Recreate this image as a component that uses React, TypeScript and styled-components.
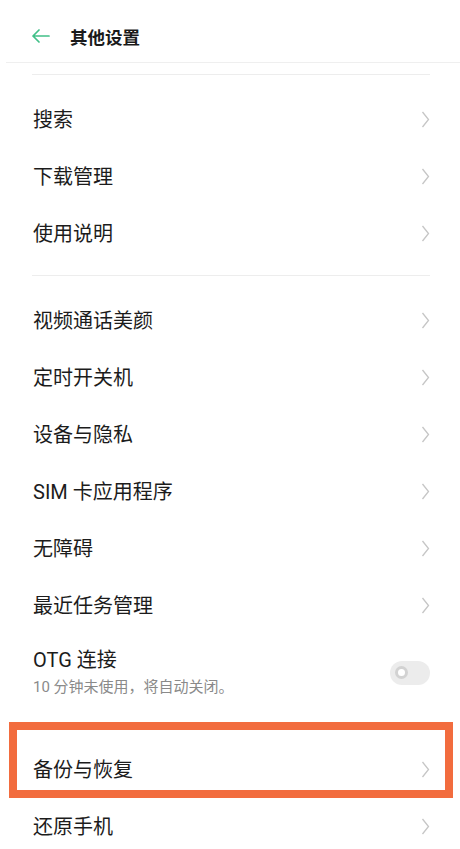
import React from "react";
import styled, { createGlobalStyle } from "styled-components";

const GlobalStyle = createGlobalStyle`
    body {
        margin: 0;
        background: #ffffff;
        font-family: Roboto, "Noto Sans CJK SC", sans-serif;
        color: #1c1c1c;
    }
`;

const Page = styled.div`
    width: 460px;
    height: 849px;
    overflow: hidden;
    background: #fff;
`;

const Header = styled.header`
    height: 63px;
    margin-left: 6px;
    padding: 10px 0 0 25px;
    box-sizing: border-box;
    display: flex;
    align-items: center;
    gap: 20px;
    border-bottom: 1px solid #efefef;
`;

const BackButton = styled.button`
    border: none;
    background: none;
    padding: 0;
    display: flex;
    cursor: pointer;
`;

const Title = styled.h1`
    margin: 0;
    font-size: 17.5px;
    font-weight: 600;
    color: #1a1a1a;
`;

const Divider = styled.div<{ $top: number }>`
    height: 1px;
    background: #ededed;
    margin: ${(p) => p.$top}px 30px 0 32px;
`;

const Section = styled.section<{ $top: number }>`
    padding-top: ${(p) => p.$top}px;
`;

const Row = styled.div`
    position: relative;
    height: 57px;
    display: flex;
    align-items: center;
    justify-content: space-between;
    padding: 0 30px 0 33px;
`;

const RowLabel = styled.span`
    font-size: 20px;
    line-height: 26px;
`;

const TwoLineRow = styled.div`
    display: flex;
    align-items: center;
    justify-content: space-between;
    padding: 13px 30px 18px 33px;
`;

const TextStack = styled.div`
    display: flex;
    flex-direction: column;
    gap: 4px;
`;

const SubLabel = styled.span`
    font-size: 15px;
    line-height: 21px;
    color: #8a8a8a;
`;

const Toggle = styled.div`
    width: 40px;
    height: 24px;
    border-radius: 12px;
    background: #ececec;
    display: flex;
    align-items: center;
    padding-left: 5px;
    box-sizing: border-box;
`;

const Knob = styled.div`
    width: 13px;
    height: 13px;
    border-radius: 50%;
    border: 3px solid #d2d2d2;
    background: #fff;
    box-sizing: border-box;
`;

const Highlight = styled.div`
    position: absolute;
    top: -19px;
    bottom: 0;
    left: 9px;
    right: 7px;
    border: 8px solid #f26c3e;
    pointer-events: none;
`;

const Chevron = () => (
    <svg width="9" height="17" viewBox="0 0 9 17">
        <polyline points="1.5,1 7.5,8.5 1.5,16" fill="none" stroke="#c6c6c6" strokeWidth="1.3" />
    </svg>
);

const BackArrow = () => (
    <svg width="19" height="14" viewBox="0 0 19 14">
        <path d="M18 7 H2 M8 1 L2 7 L8 13" fill="none" stroke="#41c088" strokeWidth="1.7" strokeLinecap="round" strokeLinejoin="round" />
    </svg>
);

const firstGroup = ["搜索", "下载管理", "使用说明"];
const secondGroup = ["视频通话美颜", "定时开关机", "设备与隐私", "SIM 卡应用程序", "无障碍", "最近任务管理"];

const App: React.FC = () => {
    return (
        <Page>
            <GlobalStyle />
            <Header>
                <BackButton>
                    <BackArrow />
                </BackButton>
                <Title>其他设置</Title>
            </Header>
            <Divider $top={11} />

            <Section $top={16}>
                {firstGroup.map((label) => (
                    <Row key={label}>
                        <RowLabel>{label}</RowLabel>
                        <Chevron />
                    </Row>
                ))}
            </Section>

            <Divider $top={13} />

            <Section $top={16}>
                {secondGroup.map((label) => (
                    <Row key={label}>
                        <RowLabel>{label}</RowLabel>
                        <Chevron />
                    </Row>
                ))}
                <TwoLineRow>
                    <TextStack>
                        <RowLabel>OTG 连接</RowLabel>
                        <SubLabel>10 分钟未使用，将自动关闭。</SubLabel>
                    </TextStack>
                    <Toggle>
                        <Knob />
                    </Toggle>
                </TwoLineRow>
            </Section>

            <Section $top={25}>
                <Row>
                    <RowLabel>备份与恢复</RowLabel>
                    <Chevron />
                    <Highlight />
                </Row>
                <Row>
                    <RowLabel>还原手机</RowLabel>
                    <Chevron />
                </Row>
            </Section>
        </Page>
    );
};

export default App;
